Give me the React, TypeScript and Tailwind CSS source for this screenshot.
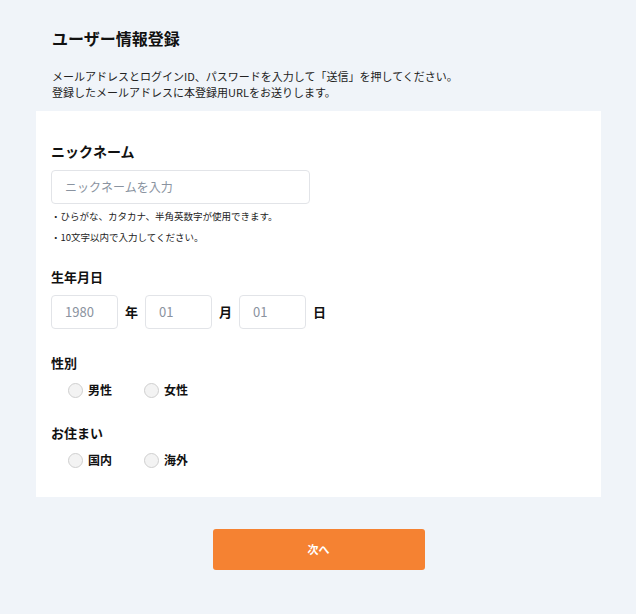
const font = { fontFamily: '"Noto Sans CJK JP", "Noto Sans", sans-serif' };

const Radio = ({ label }: { label: string }) => (
  <label className="flex items-center gap-[5px]">
    <span className="w-[15px] h-[15px] rounded-full border border-[#cfcfcf] bg-[#f3f3f3]" />
    <span className="text-[12px] font-bold text-[#111]">{label}</span>
  </label>
);

const DateBox = ({ value }: { value: string }) => (
  <div className="w-[67px] h-[34px] rounded-[4px] border border-[#e2e4e8] bg-white flex items-center px-[13px] text-[13px] text-[#8a93a0]">
    {value}
  </div>
);

export default function App() {
  return (
    <div className="min-h-[614px] w-[636px] bg-[#f0f4f9] text-[#111]" style={font}>
      <div className="pl-[36px] pr-[35px] pt-[28px] pb-[43px]">
        {/* Header */}
        <div className="px-[16px]">
          <h1 className="text-[16px] font-bold leading-[20px]">ユーザー情報登録</h1>
          <p className="mt-[20px] text-[11px] leading-[16px] text-[#222]">
            メールアドレスとログインID、パスワードを入力して「送信」を押してください。
            <br />
            登録したメールアドレスに本登録用URLをお送りします。
          </p>
        </div>

        {/* Form */}
        <div className="mt-[11px] bg-white px-[15px] pt-[31px] pb-[30px] h-[386px]">
          <div className="text-[14px] font-bold leading-[18px]">ニックネーム</div>
          <div className="mt-[10px] w-[259px] h-[34px] rounded-[4px] border border-[#e2e4e8] flex items-center px-[13px] text-[12px] text-[#8a93a0]">
            ニックネームを入力
          </div>
          <div className="mt-[6px] text-[9.5px] leading-[12px] text-[#222]">・ひらがな、カタカナ、半角英数字が使用できます。</div>
          <div className="mt-[9px] text-[9.5px] leading-[12px] text-[#222]">・10文字以内で入力してください。</div>

          <div className="mt-[25px] text-[13px] font-bold leading-[18px]">生年月日</div>
          <div className="mt-[9px] flex items-center">
            <DateBox value="1980" />
            <span className="ml-[7px] mr-[7px] text-[13px] font-bold">年</span>
            <DateBox value="01" />
            <span className="ml-[7px] mr-[7px] text-[13px] font-bold">月</span>
            <DateBox value="01" />
            <span className="ml-[7px] text-[13px] font-bold">日</span>
          </div>

          <div className="mt-[25px] text-[13px] font-bold leading-[18px]">性別</div>
          <div className="mt-[9px] pl-[17px] flex gap-[32px]">
            <Radio label="男性" />
            <Radio label="女性" />
          </div>

          <div className="mt-[25px] text-[13px] font-bold leading-[18px]">お住まい</div>
          <div className="mt-[9px] pl-[17px] flex gap-[32px]">
            <Radio label="国内" />
            <Radio label="海外" />
          </div>
        </div>

        {/* Submit */}
        <div className="mt-[32px] flex justify-center">
          <button className="w-[212px] h-[41px] rounded-[3px] bg-[#f58232] text-white text-[11px] font-bold">
            次へ
          </button>
        </div>
      </div>
    </div>
  );
}
